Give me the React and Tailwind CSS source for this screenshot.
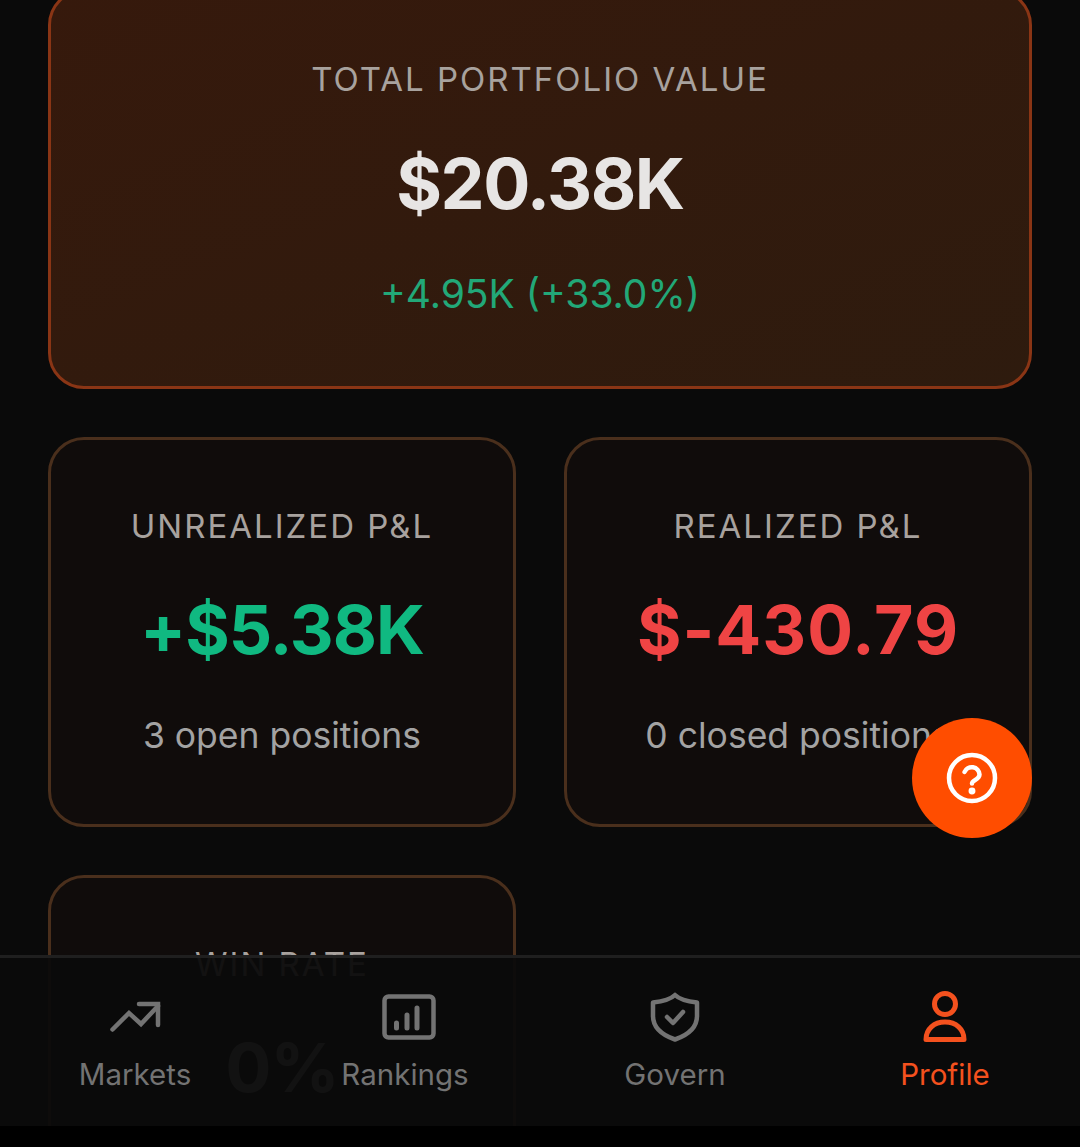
import React from "react";

const font = { fontFamily: '"Inter", "Noto Sans", "Liberation Sans", sans-serif' };

function StatCard({ label, value, valueClass, note }) {
  return (
    <div className="h-[390px] rounded-[36px] border-[3px] border-[#4a2f1c] bg-[#100c0b] flex flex-col items-center">
      <div className="mt-[64px] h-[44px] leading-[44px] text-[33px] tracking-[2px] text-[#a8a29e] whitespace-nowrap">{label}</div>
      <div className={`mt-[41px] h-[80px] leading-[80px] text-[68px] font-bold whitespace-nowrap ${valueClass}`}>{value}</div>
      <div className="mt-[42px] h-[50px] leading-[50px] text-[35.5px] text-[#a3a3a3] whitespace-nowrap">{note}</div>
    </div>
  );
}

function NavItem({ label, active, children }) {
  return (
    <div className="flex flex-col items-center">
      <div className="h-[56px] w-[64px] flex items-center justify-center">{children}</div>
      <div className={`mt-[7px] h-[44px] leading-[44px] text-[29.5px] whitespace-nowrap ${active ? "text-[#f4511e]" : "text-[#737373]"}`}>{label}</div>
    </div>
  );
}

export default function App() {
  return (
    <div style={font} className="relative h-[1147px] w-[1080px] overflow-hidden bg-black">
      <div className="h-[1126px] overflow-hidden bg-[#0a0a0a] px-[48px]">
        {/* Portfolio summary, scrolled slightly past the top edge */}
        <div className="mt-[-11px] h-[400px] rounded-[36px] border-[3px] border-[#8a3515] bg-gradient-to-br from-[#36190c] to-[#2e1b0e] flex flex-col items-center">
          <div className="mt-[65px] h-[44px] leading-[44px] text-[33px] tracking-[2px] text-[#a8a29e] whitespace-nowrap">TOTAL PORTFOLIO VALUE</div>
          <div className="mt-[41px] h-[84px] leading-[84px] text-[70px] tracking-[-1.500px] font-bold text-[#e7e5e4] whitespace-nowrap">$20.38K</div>
          <div className="mt-[40px] h-[56px] leading-[56px] text-[39px] text-[#22a878] whitespace-nowrap">+4.95K (+33.0%)</div>
        </div>

        <div className="mt-[48px] grid grid-cols-2 gap-[48px]">
          <StatCard label="UNREALIZED P&L" value="+$5.38K" valueClass="tracking-[-1px] text-[#10b981]" note="3 open positions" />
          <StatCard label="REALIZED P&L" value="$-430.79" valueClass="tracking-[1px] text-[#ef4444]" note="0 closed positions" />
          <StatCard label="WIN RATE" value="0%" valueClass="tracking-[-1px] text-[#a3a3a3]" note="" />
        </div>
      </div>

      {/* Help button */}
      <button className="absolute left-[912px] top-[718px] h-[120px] w-[120px] rounded-full bg-[#ff4d00] flex items-center justify-center">
        <svg width="54" height="54" viewBox="0 0 54 54" fill="none" stroke="#fff" strokeWidth="4.5" strokeLinecap="round">
          <circle cx="27" cy="27" r="23" />
          <path d="M19.5 21a7.8 7.8 0 0 1 15 2.5c0 5-7.5 6-7.5 9" />
          <circle cx="27" cy="40" r="1.2" fill="#fff" />
        </svg>
      </button>

      {/* Bottom tab bar */}
      <nav className="absolute left-0 right-0 top-[955px] h-[171px] border-t-[3px] border-[#1f1f1f] bg-[#0b0b0b]/95 pt-[31px] grid grid-cols-4">
        <NavItem label="Markets">
          <svg width="54" height="34" viewBox="0 0 54 34" fill="none" stroke="#737373" strokeWidth="4.5" strokeLinecap="round" strokeLinejoin="miter">
            <path d="M4.500 29.500 21 13l12 11 17-18" />
            <path d="M31 4h19v21" />
          </svg>
        </NavItem>
        <NavItem label="Rankings">
          <svg className="ml-[8px]" width="54" height="46" viewBox="0 0 54 46" fill="none" stroke="#737373">
            <rect x="2.500" y="2.500" width="49" height="41" rx="4" strokeWidth="4.500" />
            <path d="M14.500 34v-5M25 34V21M35 34V14" strokeWidth="5" strokeLinecap="round" />
          </svg>
        </NavItem>
        <NavItem label="Govern">
          <svg width="52" height="50" viewBox="0 0 52 50" fill="none" stroke="#737373" strokeWidth="4.500" strokeLinejoin="round" strokeLinecap="round">
            <path d="M26 3c5 5 13 6.500 22 7.500V24c0 11-9 19-22 23.500C13 43 4 35 4 24V10.500C13 9.500 21 8 26 3Z" />
            <path d="m18 25 6 6L34 20" />
          </svg>
        </NavItem>
        <NavItem label="Profile" active>
          <svg width="44" height="52" viewBox="0 0 44 52" fill="none" stroke="#f4511e" strokeWidth="5" strokeLinejoin="round">
            <circle cx="22" cy="13" r="10.500" />
            <path d="M3 48.500C3 38 11 31 22 31s19 7 19 17.500Z" />
          </svg>
        </NavItem>
      </nav>
    </div>
  );
}
